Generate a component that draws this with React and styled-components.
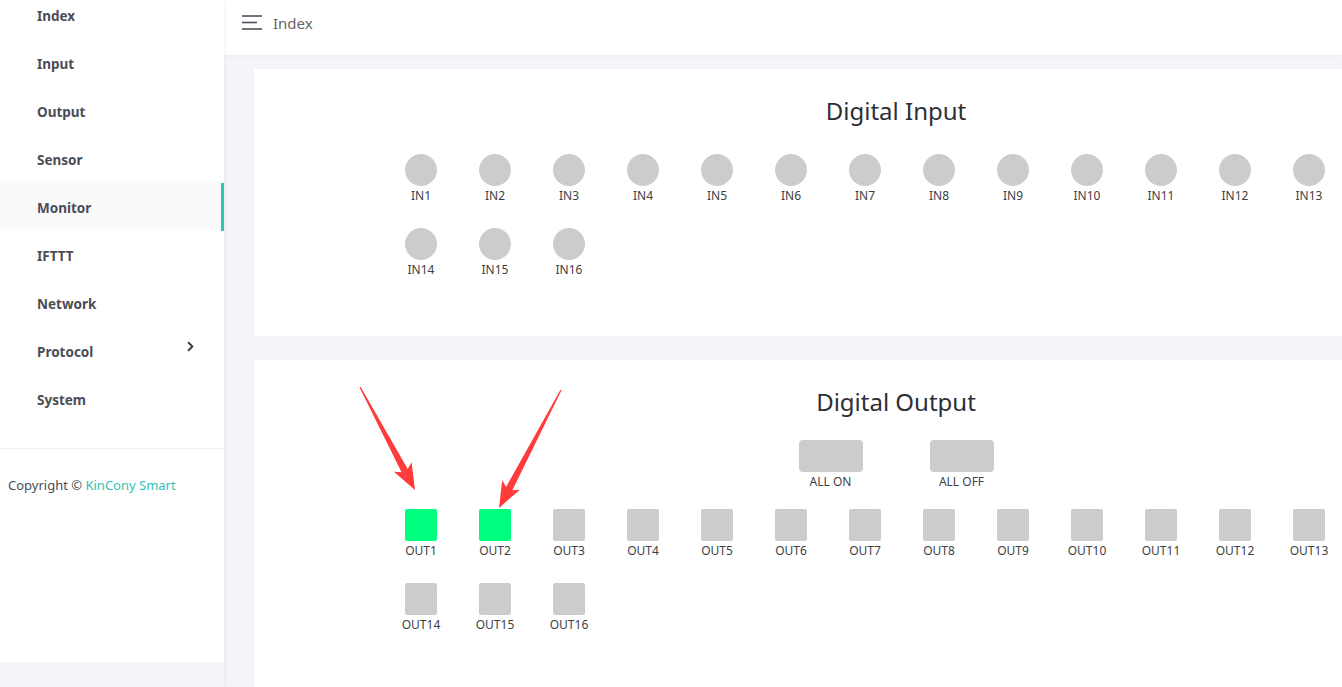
import React from "react"
import styled, { createGlobalStyle } from "styled-components"
import { ChevronRight } from "lucide-react"

const menu = ["Index", "Input", "Output", "Sensor", "Monitor", "IFTTT", "Network", "Protocol", "System"]
const inputs = Array.from({ length: 16 }, (_, i) => `IN${i + 1}`)
const outputs = Array.from({ length: 16 }, (_, i) => ({ name: `OUT${i + 1}`, on: i < 2 }))

// screenshot annotation arrows: tail -> tip
const arrows = [
  { from: [360, 387], to: [415, 490] },
  { from: [561, 390], to: [499, 508] },
]

const arrowPoints = ({ from, to }) => {
  const dx = to[0] - from[0]
  const dy = to[1] - from[1]
  const len = Math.hypot(dx, dy)
  const ux = dx / len
  const uy = dy / len
  const px = -uy
  const py = ux
  const head = 22
  const bx = to[0] - ux * head
  const by = to[1] - uy * head
  const at = (x, y, w) => [x + px * w, y + py * w]
  const pts = [
    at(from[0], from[1], 0.6),
    at(bx, by, 3.5),
    at(bx - ux * 4, by - uy * 4, 10),
    to,
    at(bx - ux * 4, by - uy * 4, -10),
    at(bx, by, -3.5),
    at(from[0], from[1], -0.6),
  ]
  return pts.map((p) => p.join(",")).join(" ")
}

const App = () => {
  return (
    <>
      <GlobalStyle />
      <Page>
        <Sidebar>
          <SidePanel>
            <Menu>
              {menu.map((item) => (
                <MenuItem key={item} active={item === "Monitor"}>
                  {item}
                  {item === "Protocol" && <ChevronRight size={15} strokeWidth={3} />}
                </MenuItem>
              ))}
            </Menu>
            <Footer>
              Copyright © <Brand>KinCony Smart</Brand>
            </Footer>
          </SidePanel>
        </Sidebar>
        <Main>
          <Header>
            <svg width="20" height="16" viewBox="0 0 20 16">
              <g stroke="#4d5058" strokeWidth="1.6">
                <line x1="0" y1="1" x2="20" y2="1" />
                <line x1="0" y1="7.5" x2="15" y2="7.5" />
                <line x1="0" y1="14" x2="20" y2="14" />
              </g>
            </svg>
            <Crumb>Index</Crumb>
          </Header>
          <Content>
            <Card height={267}>
              <Title>Digital Input</Title>
              <Grid>
                {inputs.map((name) => (
                  <Cell key={name}>
                    <Led />
                    <Label>{name}</Label>
                  </Cell>
                ))}
              </Grid>
            </Card>
            <Card height={340}>
              <Title>Digital Output</Title>
              <Actions>
                <Action>
                  <Button />
                  <Label>ALL ON</Label>
                </Action>
                <Action>
                  <Button />
                  <Label>ALL OFF</Label>
                </Action>
              </Actions>
              <Grid>
                {outputs.map((o) => (
                  <Cell key={o.name}>
                    <Relay on={o.on} />
                    <Label>{o.name}</Label>
                  </Cell>
                ))}
              </Grid>
            </Card>
          </Content>
        </Main>
        <Overlay width="1342" height="687">
          {arrows.map((a, i) => (
            <polygon key={i} points={arrowPoints(a)} fill="#ff3b3b" />
          ))}
        </Overlay>
      </Page>
    </>
  )
}

export default App

//~~~~~~~~~~~~~~~~~~~
// Styled-Components
//~~~~~~~~~~~~~~~~~~~

const GlobalStyle = createGlobalStyle`
  body {
    margin: 0;
    background: #f4f5f9;
    font-family: "Noto Sans", "Open Sans", sans-serif;
    overflow: hidden;
  }
`

const Page = styled.div`
  position: relative;
  display: flex;
  width: 1342px;
  height: 687px;
  overflow: hidden;
`

const Sidebar = styled.aside`
  width: 224px;
  flex-shrink: 0;
  box-shadow: 1px 0 4px rgba(0, 0, 0, 0.05);
  z-index: 1;
`

const SidePanel = styled.div`
  display: flow-root;
  height: 662px;
  background: #fff;
`

const Menu = styled.ul`
  list-style: none;
  margin: -9px 0 0;
  padding: 0 0 25px;
  border-bottom: 1px solid #f0f0f0;
`

const MenuItem = styled.li`
  display: flex;
  align-items: center;
  justify-content: space-between;
  height: 48px;
  padding: 1px 23px 0 37px;
  box-sizing: border-box;
  font-size: 13.5px;
  font-weight: 700;
  color: #4a4d55;
  background: ${(p) => (p.active ? "#fafafa" : "transparent")};
  border-right: 3px solid ${(p) => (p.active ? "#2ec4b6" : "transparent")};

  svg {
    color: #3a3d44;
    margin-top: -10px;
  }
`

const Footer = styled.div`
  padding: 27px 8px 0;
  font-size: 13px;
  color: #4a4d55;
`

const Brand = styled.span`
  color: #2ec4b6;
`

const Main = styled.main`
  flex: 1;
  display: flex;
  flex-direction: column;
  min-width: 0;
`

const Header = styled.header`
  height: 55px;
  box-sizing: border-box;
  padding: 0 0 9px 18px;
  flex-shrink: 0;
  display: flex;
  align-items: center;
  gap: 11px;
  background: #fff;
  box-shadow: 0 1px 4px rgba(0, 21, 41, 0.04);
`

const Crumb = styled.span`
  font-size: 15px;
  color: #666;
`

const Content = styled.div`
  display: flex;
  flex-direction: column;
  gap: 24px;
  padding: 14px 0 0 30px;
`

const Card = styled.section`
  width: 1284px;
  height: ${(p) => p.height}px;
  flex-shrink: 0;
  background: #fff;
  padding-top: 26px;
  box-sizing: border-box;
`

const Title = styled.h2`
  margin: 0 0 27px;
  font-size: 24px;
  line-height: 32px;
  font-weight: 400;
  text-align: center;
  color: #2c2f36;
`

const Grid = styled.div`
  width: 1024px;
  margin: 0 auto;
  display: flex;
  flex-wrap: wrap;
`

const Cell = styled.div`
  width: 74px;
  height: 74px;
  display: flex;
  flex-direction: column;
  align-items: center;
`

const Led = styled.div`
  width: 32px;
  height: 32px;
  border-radius: 50%;
  background: #cccccc;
`

const Relay = styled.div`
  width: 32px;
  height: 32px;
  border-radius: 2px;
  background: ${(p) => (p.on ? "#00ff7f" : "#cccccc")};
`

const Label = styled.span`
  margin-top: 2px;
  font-size: 12px;
  line-height: 16px;
  color: #3c3f46;
`

const Actions = styled.div`
  display: flex;
  justify-content: center;
  gap: 31px;
  margin: -5px 0 19px;
`

const Action = styled.div`
  width: 100px;
  display: flex;
  flex-direction: column;
  align-items: center;
`

const Button = styled.div`
  width: 64px;
  height: 32px;
  border-radius: 4px;
  background: #cccccc;
`

const Overlay = styled.svg`
  position: absolute;
  inset: 0;
  pointer-events: none;
  z-index: 5;
`
